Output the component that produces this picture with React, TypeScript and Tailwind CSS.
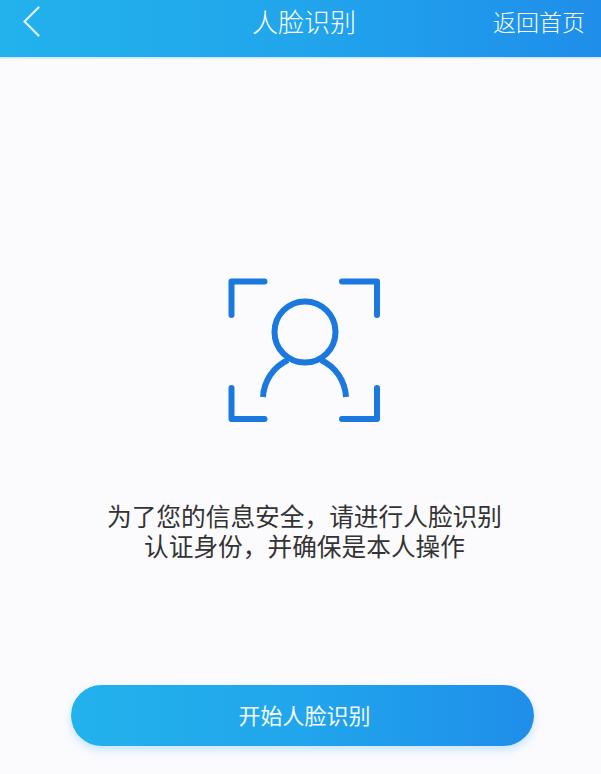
const cjk = "font-['Noto_Sans_CJK_SC','Noto_Sans',sans-serif]";

const FaceIcon = () => (
  <svg width="160" height="150" viewBox="225 275 160 150" fill="none" stroke="#1a78de" strokeWidth="6" strokeLinecap="round" strokeLinejoin="round">
    <path d="M231.5 315V281.5H264.5" />
    <path d="M342 281.5H377V315" />
    <path d="M231.5 388V419H264.5" />
    <path d="M342 419H377V388" />
    <circle cx="305" cy="332" r="30.5" />
    <path d="M263 397C264 381 273 367 288 360" strokeLinecap="butt" />
    <path d="M346 397C345 381 336 367 321 360" strokeLinecap="butt" />
  </svg>
);

const App = () => {
  return (
    <div className={`flex h-[774px] w-full flex-col overflow-hidden bg-[#fbfbfe] ${cjk}`}>
      <header className="grid h-[57px] grid-cols-[1fr_auto_1fr] items-center bg-gradient-to-r from-[#22b2ec] via-[#21a5ec] to-[#1f8eea] pb-[15px] pl-[23px] pr-[16px] text-white shadow-[0_1px_2px_rgba(120,190,240,0.5)]">
        <svg width="17" height="31" viewBox="0 0 17 31" fill="none" stroke="#e2f4fd" strokeWidth="2.2" strokeLinecap="round">
          <path d="M15.5 1.5L1.5 15.5L15.5 29.5" />
        </svg>
        <h1 className="text-[26px] font-light leading-none text-white">人脸识别</h1>
        <a className="justify-self-end text-[23px] font-light leading-none text-white">返回首页</a>
      </header>

      <main className="flex flex-1 flex-col items-center pl-2 pt-[218px]">
        <FaceIcon />
        <p className="mt-[75px] text-center text-[24.7px] font-normal leading-[30px] text-[#333333]">
          为了您的信息安全，请进行人脸识别
          <br />
          认证身份，并确保是本人操作
        </p>
      </main>

      <button className="mb-[28px] ml-[71px] flex h-[61px] w-[463px] items-center justify-center rounded-full bg-gradient-to-r from-[#22b2ec] via-[#21a5ec] to-[#1f8eea] pb-[2px] pl-[4px] text-[22px] font-normal text-[#f4fbff] shadow-[0_4px_10px_rgba(70,170,245,0.28)]">
        开始人脸识别
      </button>
    </div>
  );
};

export default App;
